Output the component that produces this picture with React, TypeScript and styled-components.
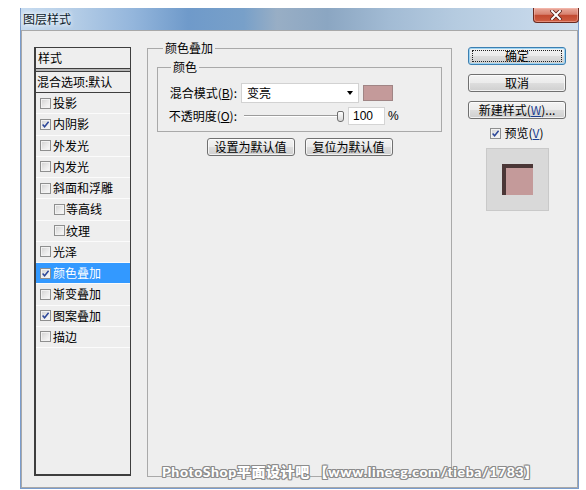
import React from "react";
import styled, { createGlobalStyle } from "styled-components";

const GlobalStyle = createGlobalStyle`
  html, body { margin: 0; padding: 0; background: #ffffff; }
  body {
    font-family: "Noto Sans CJK SC", "Noto Sans", sans-serif;
    font-size: 12px;
    color: #000;
  }
  #root { width: 586px; height: 490px; overflow: hidden; }
`;

const Page = styled.div`
  width: 586px;
  height: 490px;
  box-sizing: border-box;
  padding: 8px 0 0 20px;
`;

const Window = styled.div`
  width: 559px;
  height: 481px;
  box-sizing: border-box;
  border: 1px solid #7a9ccc;
  border-top: none;
  display: flex;
  flex-direction: column;
  background: #c4d8ec;
`;

const TitleBar = styled.div`
  height: 22px;
  flex: 0 0 22px;
  display: flex;
  align-items: flex-start;
  justify-content: space-between;
  background: linear-gradient(
    to right,
    #c6dbf0 0%,
    #b3cce6 10%,
    #94b6dc 20%,
    #6f9aca 30%,
    #78a0c9 40%,
    #98aec5 46%,
    #8ba6c2 55%,
    #a2bbd4 66%,
    #b5cbe0 78%,
    #c2d5e8 90%,
    #cfdeee 100%
  );
`;

const Title = styled.span`
  margin: 3px 0 0 2px;
  font-size: 12px;
  line-height: 16px;
  color: #0c1a2b;
  text-shadow: 0 0 4px #ffffff, 0 0 6px #ffffff;
`;

const CloseButton = styled.div`
  width: 46px;
  height: 15px;
  margin-right: -1px;
  box-sizing: border-box;
  border: 1px solid #6a2a20;
  border-top: none;
  border-radius: 0 0 4px 4px;
  background: linear-gradient(#e9aa9c 0%, #d88270 45%, #c24a31 52%, #cf5e42 100%);
  display: flex;
  align-items: center;
  justify-content: center;
  box-shadow: inset 0 0 0 1px rgba(255, 200, 190, 0.45);
`;

const Body = styled.div`
  position: relative;
  flex: 1;
  box-sizing: border-box;
  border: 1px solid #a8a8a8;
  background: #eeeeee;
  display: flex;
  align-items: flex-start;
  padding: 9px 0 0 12px;
`;

/* ---------- left list ---------- */

const LeftPanel = styled.div`
  width: 97px;
  height: 429px;
  margin-top: 7px;
  box-sizing: border-box;
  border: 1px solid #3e3e3e;
  border-left-width: 2px;
  border-bottom-width: 2px;
  display: flex;
  flex-direction: column;
`;

const HeaderRow = styled.div`
  height: 21px;
  box-sizing: border-box;
  border-bottom: 1px solid #3e3e3e;
  padding-left: 2px;
  display: flex;
  align-items: center;
  line-height: 16px;
`;

const HeaderGap = styled.div`
  height: 2px;
  background: #b6b6b6;
`;

const BlendRow = styled.div`
  height: 22px;
  box-sizing: border-box;
  border-top: 1px solid #3e3e3e;
  border-bottom: 1px solid #3e3e3e;
  padding-left: 1px;
  display: flex;
  align-items: center;
  line-height: 16px;
  white-space: nowrap;
`;

const ItemRow = styled.div<{ $indent?: boolean; $selected?: boolean }>`
  height: 21.25px;
  box-sizing: border-box;
  border-bottom: 1px solid #fbfbfb;
  padding-left: ${(p) => (p.$indent ? 18 : 4)}px;
  display: flex;
  align-items: center;
  gap: ${(p) => (p.$indent ? 1 : 2)}px;
  line-height: 16px;
  background: ${(p) => (p.$selected ? "#3399ff" : "transparent")};
  color: ${(p) => (p.$selected ? "#ffffff" : "#000000")};
  white-space: nowrap;
`;

const CheckBox = styled.span`
  width: 11px;
  height: 11px;
  flex: 0 0 11px;
  box-sizing: border-box;
  border: 1px solid #8e8f8f;
  background: linear-gradient(135deg, #d0d0d0 0%, #e8e8e8 50%, #fbfbfb 100%);
  box-shadow: inset 0 0 0 1px #f2f2f2;
  display: flex;
  align-items: center;
  justify-content: center;
`;

const Check = ({ checked }: { checked?: boolean }) => (
  <CheckBox>
    {checked && (
      <svg width="9" height="9" viewBox="0 0 9 9">
        <path d="M1.6 4.4 L3.6 6.8 L7.6 1.8" fill="none" stroke="#2c4799" strokeWidth="1.5" />
      </svg>
    )}
  </CheckBox>
);

/* ---------- middle ---------- */

const GroupBox = styled.fieldset<{ $w?: number; $h?: number }>`
  margin: 0;
  padding: 0;
  min-width: 0;
  box-sizing: border-box;
  border: 1px solid #a9a9a9;
  ${(p) => (p.$w ? `width: ${p.$w}px;` : "")}
  ${(p) => (p.$h ? `height: ${p.$h}px;` : "")}
`;

const Legend = styled.legend<{ $offset: number }>`
  margin-left: ${(p) => p.$offset}px;
  padding: 0 2px;
  line-height: 16px;
  font-size: 12px;
`;

const MainGroup = styled(GroupBox)`
  margin-left: 16px;
`;

const ColorGroup = styled(GroupBox)`
  margin: 3px 9px 0 9px;
  padding: 8px 0 6px 0;
  display: flex;
  flex-direction: column;
  gap: 4px;
`;

const FieldRow = styled.div<{ $h: number }>`
  height: ${(p) => p.$h}px;
  display: flex;
  align-items: center;
`;

const FieldLabel = styled.span`
  width: 79px;
  margin-right: 4px;
  text-align: right;
  line-height: 16px;
  white-space: nowrap;
`;

const Key = styled.span<{ $blue?: boolean }>`
  text-decoration: underline;
  color: ${(p) => (p.$blue ? "#1d3f92" : "inherit")};
`;

const Select = styled.div`
  width: 118px;
  height: 20px;
  box-sizing: border-box;
  border: 1px solid #d2d2d2;
  background: #ffffff;
  display: flex;
  align-items: center;
  justify-content: space-between;
  padding: 0 5px 0 5px;
  line-height: 16px;
`;

const Swatch = styled.div`
  width: 30px;
  height: 16px;
  margin-left: 4px;
  box-sizing: border-box;
  border: 1px solid #a08585;
  background: #c49a9a;
`;

const Slider = styled.div`
  position: relative;
  width: 105px;
  height: 18px;
`;

const Track = styled.div`
  position: absolute;
  left: 3px;
  right: 8px;
  top: 8px;
  height: 2px;
  box-sizing: border-box;
  border-top: 1px solid #9c9c9c;
  border-bottom: 1px solid #ffffff;
`;

const Thumb = styled.div`
  position: absolute;
  left: 96px;
  top: 4px;
  width: 7px;
  height: 11px;
  box-sizing: border-box;
  border: 1px solid #6e6e6e;
  border-radius: 2px 2px 3px 3px;
  background: linear-gradient(#ffffff, #d6d6d6);
`;

const NumInput = styled.div`
  width: 37px;
  height: 18px;
  margin-left: 2px;
  box-sizing: border-box;
  border: 1px solid #d4d4d4;
  background: #ffffff;
  padding-left: 4px;
  display: flex;
  align-items: center;
  font-family: "Liberation Sans", Arial, sans-serif;
  font-size: 12px;
`;

const Percent = styled.span`
  margin-left: 3px;
  font-family: "Liberation Sans", Arial, sans-serif;
  font-size: 12px;
`;

const ButtonRow = styled.div`
  margin-top: 6px;
  display: flex;
  justify-content: center;
  gap: 10px;
`;

const Button = styled.div<{ $w: number; $focus?: boolean }>`
  position: relative;
  width: ${(p) => p.$w}px;
  height: 18px;
  box-sizing: border-box;
  border: 1px solid ${(p) => (p.$focus ? "#3c7fb1" : "#707070")};
  border-radius: 3px;
  background: linear-gradient(#f3f3f3 0%, #ebebeb 48%, #dddddd 52%, #cfcfcf 100%);
  box-shadow: inset 0 0 0 1px ${(p) => (p.$focus ? "#9fd4f2" : "rgba(255,255,255,0.7)")};
  display: flex;
  align-items: center;
  justify-content: center;
  line-height: 16px;
  white-space: nowrap;
  ${(p) =>
    p.$focus
      ? `&::after {
          content: "";
          position: absolute;
          inset: 2px 3px;
          border: 1px dotted #222;
        }`
      : ""}
`;

/* ---------- right ---------- */

const RightCol = styled.div`
  width: 98px;
  margin: 7px 0 0 16px;
  display: flex;
  flex-direction: column;
  gap: 9px;
`;

const PreviewToggle = styled.div`
  margin-top: -2px;
  height: 14px;
  display: flex;
  align-items: center;
  justify-content: center;
  gap: 3px;
  line-height: 16px;
`;

const PreviewBox = styled.div`
  align-self: center;
  margin-top: -1px;
  width: 63px;
  height: 63px;
  box-sizing: border-box;
  border: 1px solid #c9c9c9;
  background: #d9d9d9;
  display: flex;
  align-items: center;
  justify-content: center;
`;

const PreviewSquare = styled.div`
  width: 31px;
  height: 31px;
  background: #c49a9a;
  box-shadow: inset 4px 4px 0 #4b3737;
`;

const Watermark = styled.div`
  position: absolute;
  left: 140px;
  top: 433px;
  font-family: "Lato", "Noto Sans CJK SC", sans-serif;
  font-weight: 900;
  font-size: 14px;
  line-height: 16px;
  letter-spacing: 0.6px;
  color: #ffffff;
  white-space: nowrap;
  text-shadow: 1px 0 0 #8c8c8c, -1px 0 0 #8c8c8c, 0 1px 0 #8c8c8c, 0 -1px 0 #8c8c8c,
    1px 1px 0 #8c8c8c, -1px -1px 0 #8c8c8c, 1px -1px 0 #8c8c8c, -1px 1px 0 #8c8c8c;
`;

const items: { label: string; checked?: boolean; indent?: boolean; selected?: boolean }[] = [
  { label: "投影" },
  { label: "内阴影", checked: true },
  { label: "外发光" },
  { label: "内发光" },
  { label: "斜面和浮雕" },
  { label: "等高线", indent: true },
  { label: "纹理", indent: true },
  { label: "光泽" },
  { label: "颜色叠加", checked: true, selected: true },
  { label: "渐变叠加" },
  { label: "图案叠加", checked: true },
  { label: "描边" },
];

export default function App() {
  return (
    <>
      <GlobalStyle />
      <Page>
        <Window>
          <TitleBar>
            <Title>图层样式</Title>
            <CloseButton>
              <svg width="12" height="10" viewBox="0 0 12 10">
                <path d="M2 1 L10 9 M10 1 L2 9" stroke="#5a2018" strokeWidth="3.6" strokeLinecap="square" />
                <path d="M2 1 L10 9 M10 1 L2 9" stroke="#ffffff" strokeWidth="2" strokeLinecap="square" />
              </svg>
            </CloseButton>
          </TitleBar>
          <Body>
            <LeftPanel>
              <HeaderRow>样式</HeaderRow>
              <HeaderGap />
              <BlendRow>混合选项:默认</BlendRow>
              {items.map((it) => (
                <ItemRow key={it.label} $indent={it.indent} $selected={it.selected}>
                  <Check checked={it.checked} />
                  <span>{it.label}</span>
                </ItemRow>
              ))}
            </LeftPanel>

            <MainGroup $w={305} $h={437}>
              <Legend $offset={15}>颜色叠加</Legend>
              <ColorGroup>
                <Legend $offset={13}>颜色</Legend>
                <FieldRow $h={20}>
                  <FieldLabel>
                    混合模式(<Key>B</Key>):
                  </FieldLabel>
                  <Select>
                    <span>变亮</span>
                    <svg width="6" height="4" viewBox="0 0 6 4">
                      <path d="M0 0 H6 L3 4 Z" fill="#000" />
                    </svg>
                  </Select>
                  <Swatch />
                </FieldRow>
                <FieldRow $h={18}>
                  <FieldLabel>
                    不透明度(<Key>O</Key>):
                  </FieldLabel>
                  <Slider>
                    <Track />
                    <Thumb />
                  </Slider>
                  <NumInput>100</NumInput>
                  <Percent>%</Percent>
                </FieldRow>
              </ColorGroup>
              <ButtonRow>
                <Button $w={88}>设置为默认值</Button>
                <Button $w={88}>复位为默认值</Button>
              </ButtonRow>
            </MainGroup>

            <RightCol>
              <Button $w={98} $focus>
                确定
              </Button>
              <Button $w={98}>取消</Button>
              <Button $w={98}>
                新建样式(<Key $blue>W</Key>)...
              </Button>
              <PreviewToggle>
                <Check checked />
                <span>
                  预览(<Key $blue>V</Key>)
                </span>
              </PreviewToggle>
              <PreviewBox>
                <PreviewSquare />
              </PreviewBox>
            </RightCol>

            <Watermark>PhotoShop平面设计吧 【www.linecg.com/tieba/1783】</Watermark>
          </Body>
        </Window>
      </Page>
    </>
  );
}
